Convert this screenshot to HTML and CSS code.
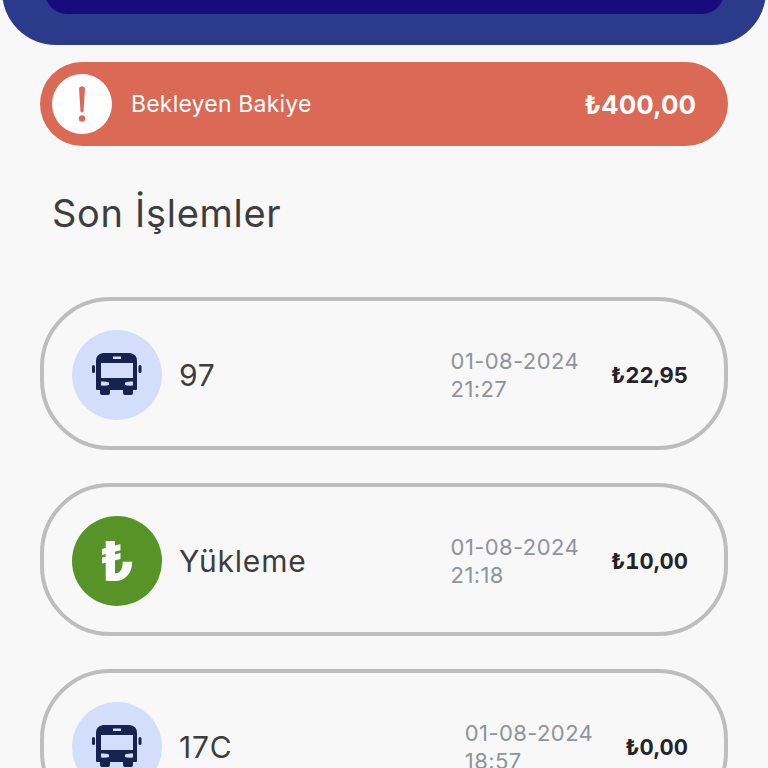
FILE: index.html
```html
<!DOCTYPE html>
<html>
<head>
    <meta name="viewport" content="width=device-width" />
    <meta http-equiv="Content-Type" content="text/html; charset=utf-8" />
    <title>Son İşlemler</title>
    <link rel="stylesheet" href="styles.css">
</head>
<body>
<svg class="sprite" width="0" height="0">
    <symbol id="bus" viewBox="0 0 50 44">
        <path fill-rule="evenodd" d="M11 0H38Q45 1 45 8V36Q45 37 44 37H41V40Q41 42 39 42H33Q31 42 31 40V37H18V40Q18 42 16 42H10Q8 42 8 40V37H5Q4 37 4 36V8Q4 1 11 0ZM21 3.500V6H29V3.500ZM9 10V25H41V10ZM9 28.500V32.500Q14 33 17 32V29.500Q13 28 9 28.500ZM41 28.500Q37 28 33 29.500V32Q36 33 41 32.500Z"/>
        <rect x="0" y="12" width="3" height="8" rx="1.500"/>
        <rect x="46.500" y="12" width="3" height="8" rx="1.500"/>
    </symbol>
</svg>

<div id="top_panel">
    <div id="top_panel_inner"></div>
</div>

<div class="pending">
    <span class="pending_icon">
        <svg width="60" height="60" viewBox="0 0 60 60"><path class="pending_mark" d="M27 14Q30 10.500 33 14L31.500 37.500Q30 39.500 28.500 37.500Z"/><circle class="pending_mark" cx="30" cy="44.500" r="3.200"/></svg>
    </span>
    <span class="pending_label">Bekleyen Bakiye</span>
    <span class="pending_amount">₺400,00</span>
</div>

<h1>Son İşlemler</h1>

<div class="list">
    <div class="card">
        <span class="card_icon bus_icon"><svg width="50" height="44"><use href="#bus"/></svg></span>
        <span class="card_name">97</span>
        <span class="card_date">01-08-2024<br>21:27</span>
        <span class="card_amount">₺22,95</span>
    </div>
    <div class="card">
        <span class="card_icon lira_icon">₺</span>
        <span class="card_name">Yükleme</span>
        <span class="card_date">01-08-2024<br>21:18</span>
        <span class="card_amount">₺10,00</span>
    </div>
    <div class="card">
        <span class="card_icon bus_icon"><svg width="50" height="44"><use href="#bus"/></svg></span>
        <span class="card_name">17C</span>
        <span class="card_date">01-08-2024<br>18:57</span>
        <span class="card_amount">₺0,00</span>
    </div>
</div>
</body>
</html>
```

FILE: styles.css
```css
html {
    background: #F8F8F8;
}

body {
    margin: 0;
    height: 768px;
    overflow: hidden;
    color: #3D3D3F;
    font-family: "Inter", "Noto Sans", sans-serif;
}

.sprite {
    display: block;
}

#top_panel {
    height: 100px;
    margin: -55px 2px 0;
    padding: 0 42px 0 43px;
    background: #2B3A8A;
    border-radius: 0 0 54px 54px;
}

#top_panel_inner {
    height: 69px;
    background: #180B7D;
    border-radius: 0 0 22px 22px;
}

.pending {
    display: flex;
    align-items: center;
    height: 84px;
    margin: 17px 40px 0;
    padding: 0 32px 0 12px;
    color: #FFF;
    background: #DA6955;
    border-radius: 42px;
}

.pending_icon {
    display: block;
    width: 60px;
    height: 60px;
    background: #FFF;
    border-radius: 50%;
}

.pending_mark {
    fill: #DA6955;
}

.pending_label {
    flex: 1;
    margin-left: 19px;
    font-size: 23px;
    letter-spacing: .2px;
}

.pending_amount {
    font-size: 26px;
    font-weight: 700;
}

h1 {
    margin: 44px 0 0 52px;
    font-size: 38px;
    font-weight: 400;
    line-height: 46px;
    letter-spacing: .7px;
}

.list {
    display: flex;
    flex-direction: column;
    gap: 33px;
    margin: 61px 40px 0;
}

.card {
    display: flex;
    flex: none;
    align-items: center;
    box-sizing: border-box;
    height: 153px;
    padding: 2px 36px 0 28px;
    border: 4px solid #BDBDBD;
    border-radius: 70px;
}

.card_icon {
    display: flex;
    align-items: center;
    justify-content: center;
    width: 90px;
    height: 90px;
    border-radius: 50%;
}

.bus_icon {
    background: #D3DEFA;
    fill: #17224F;
}

.lira_icon {
    color: #FFF;
    background: #589327;
    font-size: 54px;
    font-weight: 800;
}

.card_name {
    flex: 1;
    margin-left: 17px;
    font-size: 30px;
    letter-spacing: .8px;
}

.card_date {
    margin-right: 32px;
    color: #8F939B;
    font-size: 22px;
    line-height: 28px;
    letter-spacing: .4px;
}

.card_amount {
    color: #22242A;
    font-size: 22px;
    font-weight: 700;
    font-variant-numeric: tabular-nums;
}
```
